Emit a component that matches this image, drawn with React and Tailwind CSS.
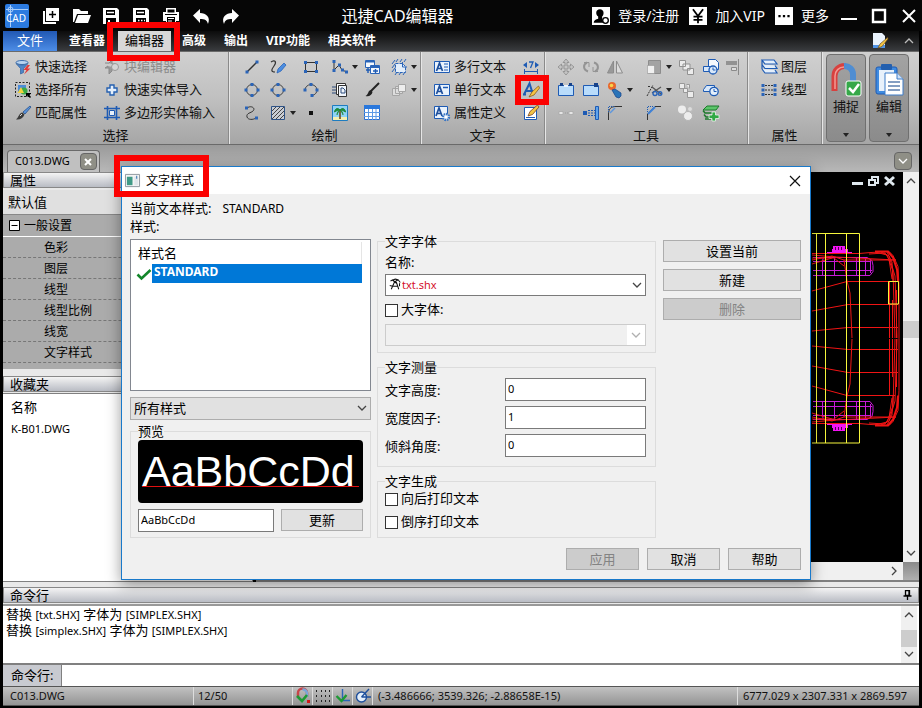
import { clsx } from 'clsx';

const icons = {
  funnel: (
    <>
      <ellipse cx="7" cy="3.5" rx="6" ry="2" fill="#b9d4f0" stroke="#3f6fae" />
      <path d="M1 4.500l4.500 5V15l3-1.500v-4l4.500-5c-3 2-9 2-12 0z" fill="#4f86c8" stroke="#33619c" strokeWidth=".7" />
      <path d="M12.500 6L8.500 11h3L9 15.500l6.500-6h-3L15 6z" fill="#e23a3a" />
    </>
  ),
  selectAll: (
    <>
      <path d="M.500.500h14v14H.500z" fill="none" stroke="#222" strokeDasharray="2 1.500" />
      <path d="M3 3h8v8H3z" fill="#4b8bd8" />
      <circle cx="9" cy="9" r="3.500" fill="#3ba946" />
      <path d="M2.500 11L6 5l3 6z" fill="#f2d23c" />
      <path d="M11 11h5v1l-2 .500L16 15l-1 1-2.500-2.500L11 15z" fill="#000" />
    </>
  ),
  brush: (
    <>
      <path d="M15 1L8 7l2 2 6-7z" fill="#5a94dc" stroke="#24508e" strokeWidth=".8" />
      <path d="M7.500 7.500C4 8 4 12 1 14.500c4 .500 7-1 8.500-5z" fill="#3b3b3b" />
      <path d="M5 11l2-2" stroke="#ddd" />
    </>
  ),
  blockEdit: (
    <>
      <path d="M1 4h4L8 1v4h3M4 7l-3 2h4v6l3-3V8" fill="#9a9a9a" stroke="#8a8a8a" />
      <circle cx="11" cy="8" r="3.500" fill="#d5d5d5" stroke="#999" />
    </>
  ),
  plus: <path d="M6 3h4v3h3v4h-3v3H6v-3H3V6h3z" fill="#e4effb" stroke="#2560b0" strokeWidth="1.400" />,
  polyInput: (
    <>
      <path d="M3.500 1v14M12.500 1v14M0 3.500h16M0 12.500h16" stroke="#1e5bb4" strokeWidth="1.600" />
      <path d="M5.500 5.500h5v5h-5z" fill="#e8f1fb" stroke="#1e5bb4" />
    </>
  ),
  line: (
    <>
      <path d="M3 13L13 3" stroke="#333" strokeWidth="1.300" />
      <path d="M1.500 11.500h3v3h-3zM11.500 1.500h3v3h-3z" fill="#2a64b8" />
    </>
  ),
  sketch: (
    <>
      <path d="M1 3c4-3 6 0 3 4s-3 6 1 6" fill="none" stroke="#333" strokeWidth="1.200" />
      <path d="M14 4l-6 6-1 4 4-2 5-6z" fill="#4d8ee0" stroke="#1e5bb4" strokeWidth=".7" />
    </>
  ),
  rect: (
    <>
      <path d="M2.500 3.500h11v9h-11z" fill="none" stroke="#333" />
      <path d="M1 2h3v3H1zM12 2h3v3h-3zM1 11h3v3H1zM12 11h3v3h-3z" fill="#2a64b8" />
    </>
  ),
  polyline: (
    <>
      <path d="M2 2v9l5-5 3 5 5 2" fill="none" stroke="#333" />
      <path d="M.500 1h3v3h-3zM.500 10h3v3h-3zM6 4.500h3v3H6zM9 9.500h3v3H9zM13 11.500h3v3h-3z" fill="#2a64b8" />
    </>
  ),
  insertBlock: (
    <>
      <path d="M1.500 1.500h9v7h-9zM6.500 6.500h9v8h-9z" fill="#f4f8fd" stroke="#2a64b8" />
      <path d="M2 2.500h8M7 8h8" stroke="#2a64b8" strokeWidth="2" />
      <path d="M9 12h5M11.500 10v4M2 11h4M4 9v5" stroke="#1e5bb4" strokeWidth="1.400" />
    </>
  ),
  region: (
    <>
      <path d="M4.500 4.500h7l3 3v6h-10z" fill="#e3eefa" stroke="#2a64b8" strokeDasharray="3 1" />
      <path d="M1 5l3-4M1 9l3-4M1 13l3-4M5 3l2-3M9 3l2-3M13 3l2-3M4 16l2-3M8 16l2-3M12 16l2-3" stroke="#2a64b8" />
      <path d="M11.500 3v5H16" fill="none" stroke="#2a64b8" />
    </>
  ),
  circle: (
    <>
      <circle cx="8" cy="8" r="5.500" fill="none" stroke="#444" />
      <path d="M6.500 1h3v3h-3zM6.500 12h3v3h-3zM.500 6.500h3v3h-3zM12.500 6.500h3v3h-3z" fill="#2a64b8" />
    </>
  ),
  arc: (
    <>
      <path d="M2 8a6 5.500 0 1 1 7 5.500" fill="none" stroke="#444" />
      <path d="M.500 6.500h3v3h-3zM6.500 1h3v3h-3zM12.500 6.500h3v3h-3zM7.500 12h3v3h-3z" fill="#2a64b8" />
    </>
  ),
  pages: (
    <>
      <path d="M4.500 1.500h9v11h-9z" fill="#fff" stroke="#333" />
      <path d="M6.500 3.500h8v11h-8z" fill="#f1f6fc" stroke="#333" />
      <path d="M0 5h4M0 8h4M0 11h4M9 6v5h4V8l-2-2z" fill="none" stroke="#2a4a7a" />
    </>
  ),
  paint: (
    <>
      <path d="M15 1L7 9" stroke="#222" strokeWidth="2" />
      <path d="M7 8c-3 0-2 4-5.500 6C5 15 8 13 8.500 10z" fill="#222" />
    </>
  ),
  cubes: (
    <>
      <path d="M1.500 6.500h7v7h-7zM4.500 4.500h7v7h-7z" fill="#ddd" stroke="#a5a5a5" />
      <path d="M7.500 2.500h7v7h-7z" fill="#ededed" stroke="#a5a5a5" />
    </>
  ),
  spline: (
    <>
      <path d="M3 3c4-3 9 0 6 3-2 2-7 2-6 6 1 3 6 3 9 1" fill="none" stroke="#333" />
      <path d="M1 1.500h3v3H1zM11 11.500h3v3h-3z" fill="#2a64b8" />
    </>
  ),
  hatch: (
    <>
      <path d="M1.500 1.500h13v13h-13z" fill="#c9cdd4" stroke="#2d5286" />
      <path d="M2 6l4-4M2 10l8-8M2 14L14 2M6 14l8-8M10 14l4-4" stroke="#444" />
    </>
  ),
  point: <path d="M6 6h4v4H6z" fill="#111" />,
  image: (
    <>
      <path d="M.500.500h15v15H.500z" fill="#8fd3f5" stroke="#1e7cc0" />
      <path d="M1 12h14v3H1z" fill="#f3efb0" />
      <path d="M8 5v9" stroke="#6b4a1e" strokeWidth="1.600" />
      <path d="M8 5C5 2 3 4 2.500 7 5 5 6 6 8 5c2 1 3 0 5.500 2C13 4 11 2 8 5zM8 5C6 6 5 8 5 10M8 5c2 1 3 3 3 5" fill="#1f8a3a" stroke="#1f8a3a" />
    </>
  ),
  table: (
    <>
      <path d="M.500.500h15v14H.500z" fill="#fff" stroke="#2a6fd0" />
      <path d="M0 0h16v4H0z" fill="#2a78dc" />
      <path d="M4.500 4v11M8.500 4v11M12 4v11M0 7.500h16M0 11.500h16" stroke="#5c9ae6" />
    </>
  ),
  mtext: (
    <>
      <path d="M.500 2.500h15v11H.500z" fill="#eaf3fd" stroke="#1e5bb4" />
      <path d="M2.500 12L5.500 4l3 8M3.500 9.500h4" fill="none" stroke="#1e4f9c" strokeWidth="1.700" />
      <path d="M10 5h4M10 8h4M10 11h4" stroke="#1e5bb4" />
    </>
  ),
  stext: (
    <>
      <path d="M.500 2.500h15v11H.500z" fill="#eaf3fd" stroke="#1e5bb4" />
      <path d="M2.500 12L5.500 4l3 8M3.500 9.500h4" fill="none" stroke="#1e4f9c" strokeWidth="1.700" />
      <path d="M9 5.500h5" stroke="#1e5bb4" strokeWidth="1.500" />
    </>
  ),
  attr: (
    <>
      <path d="M.500 1.500h13v12H.500z" fill="#eaf3fd" stroke="#1e5bb4" />
      <path d="M2 11L5 3l3 8M3 8.500h4" fill="none" stroke="#1e4f9c" strokeWidth="1.700" />
      <circle cx="12" cy="12" r="3" fill="#fff" stroke="#3a76c4" strokeWidth="2.400" strokeDasharray="1.600 .7" />
    </>
  ),
  dimText: (
    <>
      <path d="M1 12.500h14M1.500 10v5M14.500 10v5" stroke="#1e5bb4" />
      <path d="M0 6l4-3v6zM16 6l-4-3v6z" fill="#1e5bb4" />
      <path d="M6 3h4L7.500 9" fill="none" stroke="#1e5bb4" strokeWidth="1.300" />
    </>
  ),
  textStyle: (
    <>
      <path d="M1 12.500L6.500 1.500 10 12.500M3 9h7M0 12.500h3" fill="none" stroke="#1e5bb4" strokeWidth="2" />
      <path d="M15.500 4l-6.500 6-3 5 5-2 5.500-7z" fill="#f3c544" stroke="#8a5a1e" strokeWidth=".8" />
    </>
  ),
  textEdit: (
    <>
      <path d="M1.500 2.500h12v12h-12z" fill="#fff" stroke="#1e5bb4" />
      <path d="M3 12.500h9" stroke="#1e5bb4" />
      <path d="M14.500 0L7 6.500 5 11l4.500-1.500L16 2z" fill="#f3c544" stroke="#7a3f1e" strokeWidth=".8" />
    </>
  ),
  move: <path d="M8 0l3 3.500H9V7h3.500V5L16 8l-3.500 3V9H9v3.500h2L8 16l-3-3.500h2V9H3.500v2L0 8l3.500-3v2H7V3.500H5z" fill="#c4c4c4" stroke="#8c8c8c" strokeWidth=".8" />,
  rotate: (
    <>
      <path d="M4 3.500a6 5 0 0 0 1 9M12 12.500a6 5 0 0 0-1-9" fill="none" stroke="#949494" strokeWidth="2" />
      <path d="M1 3.500h5V8M15 12.500h-5V8" fill="none" stroke="#949494" />
    </>
  ),
  mirror: (
    <>
      <path d="M6.500 2v12H.500z" fill="#999" stroke="#8c8c8c" />
      <path d="M9.500 2v12h6z" fill="#dcdcdc" stroke="#8c8c8c" />
    </>
  ),
  scale: (
    <>
      <path d="M2.500 1.500h12v13h-12z" fill="#a3a3a3" stroke="#8c8c8c" />
      <path d="M1.500 6.500h7v8h-7z" fill="#f0f0f0" stroke="#8a8a8a" strokeDasharray="1 1" />
    </>
  ),
  copyGrey: <path d="M1.500 1.500h6v6h-6zM9.500 9.500h6v6h-6zM5 5h7v6H5z" fill="#ececec" stroke="#919191" />,
  copyBlue: (
    <>
      <path d="M5.500.500h7l3 3v7h-10z" fill="#f4f8fd" stroke="#1e5bb4" />
      <path d="M.500 7.500h8v5h-8z" fill="#d8e8fa" stroke="#1e5bb4" />
      <circle cx="10" cy="11" r="4" fill="#d8e8fa" stroke="#1e5bb4" strokeWidth="1.300" />
      <path d="M10 8.500V11h2.500" fill="none" stroke="#1e5bb4" />
    </>
  ),
  align: (
    <>
      <path d="M12.500 0v16" stroke="#8a8a8a" />
      <path d="M0 2h11v4H0z" fill="#929292" />
      <path d="M5.500 8.500h5v3h-5z" fill="#ddd" stroke="#8a8a8a" />
    </>
  ),
  joinGap: (
    <>
      <path d="M.500 3.500h15v10H.500z" fill="#b9dcfb" stroke="#1e5bb4" />
      <path d="M2 1h3v3H2zM11 1h3v3h-3z" fill="#17428a" />
      <path d="M6 3h4v2H6z" fill="#eaf3fd" />
    </>
  ),
  join: (
    <>
      <path d="M.500 3.500h15v10H.500z" fill="#b9dcfb" stroke="#1e5bb4" />
      <path d="M11 1h4v4h-4z" fill="#17428a" />
    </>
  ),
  explode: (
    <>
      <circle cx="5" cy="4" r="4" fill="#e8682c" />
      <circle cx="4.500" cy="3.500" r="1.800" fill="#f8d24a" />
      <path d="M5 8l3-1 6 4v3l-2 2-3-1z" fill="#2a74b8" stroke="#17428a" strokeWidth=".7" />
    </>
  ),
  trim: (
    <>
      <path d="M1 14L7 3M2 4.500h3" stroke="#333" strokeDasharray="2 1" />
      <path d="M6 11l9-6M6 5l9 7" stroke="#555" strokeWidth="1.300" />
      <circle cx="9" cy="11.500" r="2" fill="none" stroke="#2a64b8" strokeWidth="1.400" />
      <circle cx="14" cy="11.500" r="1.800" fill="none" stroke="#2a64b8" strokeWidth="1.400" />
    </>
  ),
  arrayGrey: <path d="M1.500 1.500h5v5h-5zM5.500 6.500h4v4h-4zM9.500 9.500h6v6h-6zM8.500 2.500h3v4" fill="#ececec" stroke="#999" />,
  offset: (
    <>
      <path d="M.500 7.500l3-4h8v6h-11z" fill="#d8e8fa" stroke="#1e5bb4" />
      <circle cx="11" cy="9.500" r="4.200" fill="#e4effb" stroke="#1e5bb4" strokeWidth="1.300" />
      <path d="M11 7v2.500h2.500" fill="none" stroke="#1e5bb4" />
    </>
  ),
  breakAt: (
    <>
      <path d="M1 6.500h4v3H1zM11 6.500h4v3h-4z" fill="#e6e6e6" stroke="#aaa" strokeWidth=".8" />
      <path d="M7 7.500h1v1H7zM9 7.500h1v1H9z" fill="#999" />
    </>
  ),
  extend: (
    <>
      <path d="M12.500 1.500h3v13h-3z" fill="#5fa4ec" stroke="#1e5bb4" />
      <path d="M0 6h4v4H0z" fill="#1e5bb4" />
      <path d="M5 5.500h7M5 10.500h7M5 8h7" stroke="#1e5bb4" strokeDasharray="2 1" />
    </>
  ),
  fillet: (
    <>
      <path d="M1.500 15V9C1.500 4 4 1.500 9 1.500h6" fill="none" stroke="#333" />
      <path d="M1.500 7V1.500H7" fill="none" stroke="#1e5bb4" strokeDasharray="1 1" />
      <path d="M3 8l5-5" stroke="#5c96de" strokeWidth="1.400" />
    </>
  ),
  chamfer: (
    <>
      <path d="M1.500 15V9L9 1.500h6" fill="none" stroke="#333" />
      <path d="M1.500 7V1.500H7" fill="none" stroke="#1e5bb4" strokeDasharray="1 1" />
      <path d="M2 9l7-7" stroke="#3f82d8" strokeWidth="2" />
    </>
  ),
  circlesGrey: (
    <>
      <circle cx="4" cy="4.500" r="4" fill="#ededed" />
      <circle cx="12" cy="4" r="2.500" fill="#dcdcdc" stroke="#bbb" />
      <circle cx="10" cy="11" r="4.500" fill="#ededed" stroke="#b5b5b5" />
    </>
  ),
  layerAdd: (
    <>
      <path d="M0 5l4-4h12l-3 4z" fill="#5cc46a" stroke="#1d7a2c" />
      <path d="M0 5.500l2 2.500h7M1 9.500L3 12h5M2 14h6" fill="none" stroke="#1d7a2c" strokeWidth="1.500" />
      <path d="M9 7h3.500v3H16v3.500h-3.500V16H9v-2.500H6V10h3z" fill="#2fa844" stroke="#e8f5ea" strokeWidth=".8" />
    </>
  ),
  layers: (
    <path d="M1 1h12l3 4H4zM1 5.500l3 4h12l-2-3M1 10l3 4h12l-2-3M1 1v9" fill="#e4effb" stroke="#1e5bb4" strokeWidth="1.200" />
  ),
  linetype: (
    <>
      <path d="M4 3.500h8M4 8h8M4 12.500h8" stroke="#333" strokeDasharray="2 1" />
      <path d="M.500 2h3v3h-3zM12.500 2h3v3h-3zM.500 6.500h3v3h-3zM12.500 6.500h3v3h-3zM.500 11h3v3h-3zM12.500 11h3v3h-3z" fill="#2a64b8" />
    </>
  ),
  penPage: (
    <>
      <path d="M1 0h9l3 3v12H1z" fill="#eaf3fd" />
      <path d="M1 12h12v3H1z" fill="#4f93e6" />
      <path d="M15.500 4.500L8 11l-2 4 4-1.500 6-7.500z" fill="#f3c544" stroke="#6a4a1e" strokeWidth=".7" />
    </>
  ),
  check: <path d="M1.500 8.500l4 4L14.500 4" fill="none" stroke="#13862a" strokeWidth="2.600" />,
  appWindow: (
    <>
      <path d="M.500 1.500h15v13H.500z" fill="#f4f4f4" stroke="#8c959d" />
      <path d="M2 4h6v9H2z" fill="#3f9a86" />
      <path d="M10 4h4v9h-4z" fill="#dfe6ea" />
      <path d="M12 3h1v3h-1z" fill="#2c6db0" />
    </>
  ),
  compass: (
    <path d="M3 15L7 6h3l3 9M5 11h7M6 4a2.500 2.500 0 1 1 5 0M2 4l4-2M12 2l3 4M7 6l5-4M10 7L5 3M1 10l4 1M14 7v4" fill="none" stroke="#111" strokeWidth="1.400" />
  ),
  newFile: (
    <>
      <path d="M0 3h2v11h11v2H0z" fill="#fff" />
      <path d="M3 0h13v13H3z" fill="#fff" />
      <path d="M9.500 3v7M6 6.500h7" stroke="#000" strokeWidth="1.500" />
    </>
  ),
  open: <path d="M0 1h6l2 2h7v3H4L1 14H0zM5 7h13l-3 8H2z" fill="#fff" />,
  save: (
    <>
      <path d="M0 0h14l2 2v14H0z" fill="#fff" />
      <path d="M3 2h9v5H3zM3 10h10v6H3z" fill="#000" />
      <path d="M4 4.500h7" stroke="#fff" strokeWidth="1.500" />
      <path d="M5 12h2v4H5z" fill="#fff" />
    </>
  ),
  saveAs: (
    <>
      <path d="M0 0h14l2 2v14H0z" fill="#fff" />
      <path d="M3 2h9v5H3zM3 10h10v6H3z" fill="#000" />
      <path d="M4 4.500h7M5 12.500h1.500M8 12.500h1.500M11 12.500h1" stroke="#fff" strokeWidth="1.500" />
    </>
  ),
  print: (
    <>
      <path d="M3 0h10v4h3v9h-3v3H3v-3H0V4h3z" fill="#fff" />
      <path d="M4.500 1.500h7v3h-7zM4 9h8v5.500H4zM2 6h12v1H2z" fill="#000" />
      <path d="M5 10.500h6M5 13h4" stroke="#fff" />
    </>
  ),
  undo: <path d="M7 1v4c6 0 11 4 8 11-1-4-3-5-8-5v4L0 7.500z" fill="#fff" />,
  redo: <path d="M9 1v4C3 5-2 9 1 16c1-4 3-5 8-5v4l7-7.500z" fill="#fff" />,
  user: (
    <>
      <path d="M0 0h16v16H0z" fill="#fff" />
      <path d="M7 2c4 0 4 5 2 6.500V10l1.500 4H1.500c0-2 2-3 4-3.500V8.500C3 7 3 2 7 2z" fill="#000" />
      <circle cx="12" cy="12" r="2.500" fill="#fff" stroke="#000" strokeWidth="1.200" />
    </>
  ),
  yen: (
    <>
      <path d="M0 0h16v16H0z" fill="#fff" />
      <path d="M3.500 2L8 8l4.500-6M8 8v6.500M4 8.500h8M4 11.500h8" fill="none" stroke="#000" strokeWidth="1.600" />
    </>
  ),
  dots: (
    <>
      <path d="M0 0h16v16H0z" fill="#fff" />
      <path d="M3 7h2v2H3zM7 7h2v2H7zM11 7h2v2h-2z" fill="#000" />
    </>
  ),
  minimize: <path d="M0 11h16" stroke="#fff" strokeWidth="2" />,
  maximize: <path d="M2 2h12v12H2z" fill="none" stroke="#fff" strokeWidth="2.400" />,
  close: <path d="M2 2l12 12M14 2L2 14" stroke="#fff" strokeWidth="2" />,
  osnap: (
    <>
      <path d="M3 9V5a4 4 0 0 1 9 0v4" fill="none" stroke="#c8464a" strokeWidth="2.500" />
      <path d="M7.500 1.500A4 4 0 0 1 12 5.500V9" fill="none" stroke="#7aa6d8" strokeWidth="2.500" />
      <path d="M2 8l5 5 5-6" fill="none" stroke="#1d9a34" strokeWidth="2.600" />
      <path d="M12 12h3v3h-3z" fill="#d01818" />
    </>
  ),
  grid: <path d="M1 2h1v2H1zM6 2h1v2H6zM10 2h1v2h-1zM14 2h1v2h-1zM1 7h1v2H1zM6 7h1v2H6zM10 7h1v2h-1zM14 7h1v2h-1zM1 12h1v2H1zM6 12h1v2H6zM10 12h1v2h-1zM14 12h1v2h-1z" fill="#222" />,
  ortho: (
    <>
      <path d="M7.500 1v12M7 12.500h8" stroke="#2a64b8" strokeWidth="1.400" />
      <path d="M1.500 8l5 5 5-6" fill="none" stroke="#1d9a34" strokeWidth="2.400" />
    </>
  ),
  polar: (
    <>
      <circle cx="6.500" cy="9" r="5" fill="#e4effb" stroke="#1e4f9c" strokeWidth="1.400" />
      <path d="M6.500 9H16M6.500 9L14 1" stroke="#1e4f9c" strokeWidth="1.400" />
    </>
  ),
};

const Icon = ({ name, className = 'size-4' }) => (
  <svg viewBox="0 0 16 16" className={clsx('shrink-0 overflow-visible', className)} aria-hidden="true">
    {icons[name]}
  </svg>
);

const Caret = () => <span className="block size-0 border-x-3 border-t-4 border-x-transparent border-t-[#222]" />;

const Chevron = ({ className, dir = 'down' }) => {
  const points = { down: 'M1 3l4 4 4-4', up: 'M1 7l4-4 4 4', right: 'M3 1l4 4-4 4' };
  return (
    <svg viewBox="0 0 10 10" className={clsx('size-2.5 shrink-0', className)} aria-hidden="true">
      <path d={points[dir]} fill="none" stroke="currentColor" strokeWidth="1.300" />
    </svg>
  );
};

const Highlight = ({ className }) => (
  <span className={clsx('pointer-events-none absolute z-30 border-6 border-[#fb0000]', className)} />
);

const quickActions = [
  ['newFile', '新建'],
  ['open', '打开'],
  ['save', '保存'],
  ['saveAs', '另存为'],
  ['print', '打印'],
  ['undo', '撤销'],
  ['redo', '重做'],
];

const TitleBar = () => (
  <header className="flex h-[31px] items-center bg-[#060606] px-[3px] text-white">
    <svg viewBox="0 0 24 24" className="ml-0.5 size-6" aria-hidden="true">
      <rect width="24" height="24" rx="2" fill="#2c7be0" />
      <path d="M5.500 1v22M1 5.500h22" stroke="#a9cdf8" />
      <circle cx="5.500" cy="5.500" r="2.500" fill="none" stroke="#a9cdf8" />
      <text x="1" y="18" fontSize="10" fontFamily="Noto Sans" fill="#fff">CAD</text>
    </svg>
    <div className="ml-3.5 flex items-center gap-3.5">
      {quickActions.map(([icon, label]) => (
        <button key={icon} aria-label={label}>
          <Icon name={icon} />
        </button>
      ))}
    </div>
    <h1 className="flex-1 pr-9 text-center text-base">迅捷CAD编辑器</h1>
    <div className="flex items-center text-sm">
      <button className="flex items-center gap-2">
        <Icon name="user" className="size-[18px]" />
        登录/注册
      </button>
      <button className="ml-2.5 flex items-center gap-2">
        <Icon name="yen" className="size-[18px]" />
        加入VIP
      </button>
      <button className="ml-2.5 flex items-center gap-2">
        <Icon name="dots" className="size-[18px]" />
        更多
      </button>
      <div className="ml-3 flex items-center gap-3.5 pr-0.5">
        <button aria-label="最小化"><Icon name="minimize" /></button>
        <button aria-label="最大化"><Icon name="maximize" /></button>
        <button aria-label="关闭"><Icon name="close" /></button>
      </div>
    </div>
  </header>
);

const menuTabs = ['查看器', '编辑器', '高级', '输出', 'VIP功能', '相关软件'];

const MenuBar = () => (
  <nav className="flex h-5 items-stretch bg-gradient-to-b from-[#0c0c0c] to-[#3a3c3f] text-xs font-bold text-white">
    <button className="mr-[3px] w-[54px] bg-gradient-to-b from-[#2158b4] to-[#4d8de6] text-[13px] font-normal">文件</button>
    {menuTabs.map((tab) =>
      tab === '编辑器' ? (
        <button key={tab} className="relative mx-1 mr-0.5 bg-[#d8d8d8] px-[7px] text-[13px] font-normal text-black">
          {tab}
          <Highlight className="-top-[9px] -right-[9px] -bottom-[10px] -left-[11px]" />
        </button>
      ) : (
        <button key={tab} className="px-[9px]">{tab}</button>
      ),
    )}
    <div className="ml-auto flex items-center gap-4 pr-[5px]">
      <button aria-label="自定义"><Icon name="penPage" /></button>
      <button aria-label="收起功能区"><Chevron dir="up" className="text-[#bbb]" /></button>
    </div>
  </nav>
);

const RibbonGroup = ({ title, className, children }) => (
  <section className={clsx('flex flex-col border-r border-[#8a8a8a] shadow-[1px_0_0_#e6e6e6]', className)}>
    <div className="h-[70px] pt-[3px]">{children}</div>
    <h2 className="pt-1 text-center text-[13px] leading-[18px]">{title}</h2>
  </section>
);

const ToolButton = ({ icon, label, muted, caret }) => (
  <button
    aria-label={label ?? icon}
    className={clsx('flex h-[23px] items-center gap-1 text-[13px] whitespace-nowrap', muted && 'text-[#8b8b8b]')}
  >
    {icon && <Icon name={icon} />}
    {label}
    {caret && <Caret />}
  </button>
);

const drawTools = [
  ['line'], ['sketch'], ['rect'], ['polyline', true], ['insertBlock'], ['region', true],
  ['circle'], ['circle'], ['arc'], ['pages'], ['paint'], ['cubes', true],
  ['spline'], ['hatch', true], ['point'], ['image'], ['table'],
];

const editTools = [
  ['move'], ['rotate'], ['mirror'], ['scale', true], ['copyGrey'], ['copyBlue'], ['align'],
  ['joinGap'], ['join'], ['explode', true], ['trim', true], ['arrayGrey'], ['offset'], null,
  ['breakAt'], ['extend'], ['fillet'], ['chamfer'], ['circlesGrey'], ['layerAdd'],
];

const LargeButton = ({ label, children }) => (
  <button className="my-0.5 flex w-10 flex-col items-center justify-between rounded border border-[#6f6f6f] bg-gradient-to-b from-[#a3a3a3] to-[#8b8b8b] pt-2 pb-1 text-[13px] leading-[18px]">
    <span className="flex flex-col items-center">
      {children}
      {label}
    </span>
    <Caret />
  </button>
);

const Ribbon = () => (
  <div className="flex h-[94px] border-y border-[#6a6a6a] bg-gradient-to-b from-[#d0d0d0] via-[#c0c0c0] to-[#a6a6a6] text-[#111]">
    <RibbonGroup title="选择" className="w-[226px]">
      <div className="grid grid-cols-[89px_1fr] pl-3">
        <ToolButton icon="funnel" label="快速选择" />
        <ToolButton icon="blockEdit" label="块编辑器" muted />
        <ToolButton icon="selectAll" label="选择所有" />
        <ToolButton icon="plus" label="快速实体导入" />
        <ToolButton icon="brush" label="匹配属性" />
        <ToolButton icon="polyInput" label="多边形实体输入" />
      </div>
    </RibbonGroup>
    <RibbonGroup title="绘制" className="w-[192px]">
      <div className="grid grid-cols-[26px_33px_29px_32px_27px_26px] pl-[15px]">
        {drawTools.map(([icon, caret], i) => (
          <ToolButton key={i} icon={icon} caret={caret} />
        ))}
      </div>
    </RibbonGroup>
    <RibbonGroup title="文字" className="w-[124px]">
      <div className="grid grid-cols-[89px_1fr] pl-[13px]">
        <ToolButton icon="mtext" label="多行文本" />
        <ToolButton icon="dimText" />
        <ToolButton icon="stext" label="单行文本" />
        <div className="relative">
          <ToolButton icon="textStyle" />
          <Highlight className="-top-[3px] -left-2 h-[30px] w-[34px]" />
        </div>
        <ToolButton icon="attr" label="属性定义" />
        <ToolButton icon="textEdit" />
      </div>
    </RibbonGroup>
    <RibbonGroup title="工具" className="w-[203px]">
      <div className="grid grid-cols-[25px_24px_39px_32px_25px_23px_20px] pl-[13px]">
        {editTools.map((tool, i) =>
          tool ? <ToolButton key={i} icon={tool[0]} caret={tool[1]} /> : <span key={i} />,
        )}
      </div>
    </RibbonGroup>
    <RibbonGroup title="属性" className="w-[74px]">
      <div className="pl-[13px]">
        <ToolButton icon="layers" label="图层" />
        <ToolButton icon="linetype" label="线型" />
      </div>
    </RibbonGroup>
    <div className="ml-1 flex gap-[3px]">
      <LargeButton label="捕捉">
        <svg viewBox="0 0 32 34" className="h-[34px] w-8" aria-hidden="true">
          <path d="M4.500 28V13a10 10 0 0 1 10-10" fill="none" stroke="#d8413f" strokeWidth="6" />
          <path d="M14 3a8.500 8.500 0 0 1 9 9v6" fill="none" stroke="#4f8dd2" strokeWidth="6" />
          <path d="M5 26V13a9 9 0 0 1 9-9" fill="none" stroke="#f19a94" strokeWidth="1.500" />
          <rect x="16" y="18" width="15" height="15" rx="2" fill="#35a849" stroke="#fff" />
          <path d="M19 25l4 4 6-8" fill="none" stroke="#fff" strokeWidth="2.500" />
        </svg>
      </LargeButton>
      <LargeButton label="编辑">
        <svg viewBox="0 0 32 34" className="h-[34px] w-8" aria-hidden="true">
          <rect x="3" y="4" width="21" height="27" rx="2" fill="#3f8be0" stroke="#1e5bb4" />
          <rect x="6" y="7" width="15" height="21" fill="#e8f1fb" />
          <rect x="8" y="1" width="11" height="6" rx="1" fill="#235fae" />
          <path d="M12 10h12l6 6v16H12z" fill="#fff" stroke="#3f7cc8" />
          <path d="M24 10v6h6" fill="#cfe1f7" stroke="#3f7cc8" />
          <path d="M15 19h12M15 23h12M15 27h12" stroke="#5c7fae" strokeWidth="1.500" />
        </svg>
      </LargeButton>
    </div>
  </div>
);

const DocumentTabs = () => (
  <div className="flex h-[27px] items-end justify-between bg-gradient-to-b from-[#9a9a9a] to-[#b8b8b8] pr-[7px]">
    <div className="ml-1 flex h-[22px] items-center gap-2.5 rounded-t-sm border border-b-0 border-[#6a6a6a] bg-[#c0c0c0] pl-[7px] text-[11px]">
      C013.DWG
      <button aria-label="关闭标签" className="mr-0.5 flex size-[17px] items-center justify-center rounded-sm border border-[#666] bg-[#8f8f86]">
        <svg viewBox="0 0 8 8" className="size-2"><path d="M1 1l6 6M7 1L1 7" stroke="#fff" strokeWidth="2" /></svg>
      </button>
    </div>
    <button aria-label="文档列表" className="mb-0.5 flex size-[18px] items-center justify-center rounded-sm border border-[#666] bg-[#8f8f86] text-white">
      <Chevron />
    </button>
  </div>
);

const PanelHeader = ({ title, children }) => (
  <div className="flex h-4 items-center justify-between border border-[#888] bg-gradient-to-b from-[#f4f4f4] to-[#b9bcc4] px-1.5 text-[13px] leading-[14px]">
    <h2>{title}</h2>
    {children}
  </div>
);

const properties = ['色彩', '图层', '线型', '线型比例', '线宽', '文字样式'];

const SidePanel = () => (
  <aside className="flex w-[250px] flex-col border-r border-[#808080] bg-[#e9e9e9]">
    <PanelHeader title="属性" />
    <div className="mt-0.5 h-6 bg-[#e0e0e0] pl-[5px] text-[13px] leading-6">默认值</div>
    <div className="bg-[#ababab] pb-1.5">
      <h3 className="flex h-[23px] items-center gap-1 border-t border-b border-t-[#888] border-b-white pl-1.5 text-xs">
        <svg viewBox="0 0 11 11" className="size-[11px]" aria-hidden="true">
          <path d="M.500.500h10v10H.500z" fill="#fff" stroke="#000" />
          <path d="M2.500 5.500h6" stroke="#000" />
        </svg>
        一般设置
      </h3>
      <ul className="text-xs">
        {properties.map((name) => (
          <li key={name} className="h-[21px] border-b border-dashed border-[#777] pl-[41px] leading-[21px]">{name}</li>
        ))}
      </ul>
    </div>
    <div className="mt-[7px]">
      <PanelHeader title="收藏夹" />
    </div>
    <div className="mt-px flex-1 border-y border-[#808080] bg-white px-2 pt-0.5 text-[13px]">
      <div className="leading-[22px]">名称</div>
      <div className="text-[11px] leading-[22px]">K-B01.DWG</div>
    </div>
  </aside>
);

const CarHalf = () => (
  <>
    <g stroke="#c81ad8" fill="none">
      <path d="M812 257.500h54l5 3 1 5v6l-3 4h-57M812 270.500h59M815.500 257v18M822.500 257l-1 4v14M833.500 257v18M845.500 257v18M855.500 257v18M864.500 258v17M869.500 259v14M812 261.500h58" />
    </g>
    <path d="M826 252h5v-3h1v-3h12v3h3v3h4v2h-25z" fill="#f414f4" />
    <path d="M834.500 247v3M837.500 247v3M840.500 247v3" stroke="#500050" />
    <g stroke="#f01414" fill="none">
      <path d="M811 253.500h47l12-1 18-1 4 4 5 11 1 20v52M868 254l16-1 4 6 3 20M874 252l12 3 6 16 2 67M880 252l8 4 6 20 2 62M886 252l5 10 1 20M811 260l20-4 12 4 3 21M811 258h22l10 8M811 255l24 2 60 3M843 260h52M811 264l20-6" />
      <path d="M874 251.500h13l5 6 4 12 1 12" strokeWidth="2" />
      <path d="M811 291l35-9.500h48M811 311l36-6.500h50M811 331l36-3.500h50M846 281l3 12 1 22 1 23M888.500 281v57M891.500 300v38M895.500 290v48" />
    </g>
  </>
);

const Drawing = () => (
  <svg viewBox="782 172 120 390" className="h-[390px] w-[120px]" aria-hidden="true">
    <CarHalf />
    <g transform="translate(0 677) scale(1 -1)">
      <CarHalf />
    </g>
    <path d="M811 233.500h47.500v209.500H811M815.500 233v210M824.500 233v210M845.500 233v210M887.500 281.500h10v22.500h-10z" fill="none" stroke="#f6f63c" />
  </svg>
);

const Canvas = () => (
  <main className="ml-[3px] grid flex-1 grid-cols-[1fr_16px] grid-rows-[1fr_18px] border-b-2 border-[#808080]">
    <div className="relative flex justify-end bg-black">
      <Drawing />
      <svg viewBox="0 0 44 12" className="absolute top-[3px] right-[7px] h-3 w-11" aria-hidden="true">
        <path d="M0 8.500h11" stroke="#dfe8ee" strokeWidth="3" />
        <path d="M17 5h6v5h-6zM20 4.500V2h6v6h-2.500" fill="none" stroke="#dfe8ee" strokeWidth="2" />
        <path d="M33 2l9 8M42 2l-9 8" stroke="#dfe8ee" strokeWidth="3" />
      </svg>
    </div>
    <div className="flex flex-col items-center justify-between bg-[#f0f0f0] py-1 text-[#444]">
      <Chevron dir="up" />
      <span className="mb-[76px] h-[17px] w-full bg-[#cdcdcd]" />
      <Chevron />
    </div>
    <div className="flex items-center justify-end bg-[#f0f0f0] pr-1 text-[#444]">
      <Chevron dir="right" />
    </div>
    <div className="bg-gradient-to-b from-[#8a8a8a] to-[#b0b0b0]" />
  </main>
);

const CommandPanel = () => (
  <section className="bg-[#e9e9e9] pt-[5px]">
    <PanelHeader title="命令行">
      <svg viewBox="0 0 9 10" className="h-2.5 w-[9px]" aria-hidden="true">
        <path d="M2.500.500h4v5h-4zM.500 6h8M4.500 6v4M6 1v5" fill="none" stroke="#000" strokeWidth="1.300" />
      </svg>
    </PanelHeader>
    <div className="mt-px flex h-[61px] justify-between border-y-2 border-[#808080] border-t-[#999] bg-white pr-0.5">
      <div className="pl-[3px] text-[13px] leading-4">
        <p className="h-4">替换 <span className="text-[11px]">[txt.SHX]</span> 字体为 <span className="text-[11px]">[SIMPLEX.SHX]</span></p>
        <p className="h-4">替换 <span className="text-[11px]">[simplex.SHX]</span> 字体为 <span className="text-[11px]">[SIMPLEX.SHX]</span></p>
      </div>
      <div className="flex w-4 flex-col items-center justify-between bg-[#f0f0f0] py-1 text-[#444]">
        <Chevron dir="up" />
        <span className="mt-2 h-[17px] w-full bg-[#cdcdcd]" />
        <Chevron />
      </div>
    </div>
    <div className="flex h-[21px]">
      <label htmlFor="command" className="w-[59px] border-r border-[#808080] bg-[#c8cad0] pl-2 text-[13px] leading-5">命令行:</label>
      <input id="command" className="flex-1 bg-white px-1 text-[13px] outline-none" />
    </div>
  </section>
);

const StatusBar = () => (
  <footer className="flex h-5 items-center border-y border-[#555] bg-gradient-to-b from-[#c2c2c2] to-[#949494] text-[11px] leading-[18px] text-[#111]">
    <span className="w-[190px] pl-[7px]">C013.DWG</span>
    <span className="w-[99px] border-l border-[#ddd] pl-1">12/50</span>
    {['osnap', 'grid', 'ortho', 'polar'].map((name) => (
      <button key={name} aria-label={name} className="flex h-full w-5 items-center justify-center border-l border-[#ddd]">
        <Icon name={name} />
      </button>
    ))}
    <span className="w-[251px] border-l border-[#ddd] pl-[5px]">(-3.486666; 3539.326; -2.88658E-15)</span>
    <span className="ml-auto border-l border-[#ddd] pr-3 pl-[5px]">6777.029 x 2307.331 x 2869.597</span>
  </footer>
);

const DialogButton = ({ disabled, className, children }) => (
  <button
    disabled={disabled}
    className={clsx(
      'h-[22px] border border-[#adadad] text-[13px] leading-[18px]',
      disabled ? 'bg-[#cccccc] text-[#838383]' : 'bg-[#e1e1e1] text-black',
      className,
    )}
  >
    {children}
  </button>
);

const Group = ({ title, className, children }) => (
  <fieldset className={clsx('border border-[#dcdcdc] px-[7px]', className)}>
    <legend className="text-[13px] leading-[18px]">{title}</legend>
    {children}
  </fieldset>
);

const CheckRow = ({ children }) => (
  <label className="flex h-[18px] items-center gap-[3px] text-[13px]">
    <input type="checkbox" className="size-[13px] appearance-none border border-[#333] bg-white" />
    {children}
  </label>
);

const measures = [
  { id: 'height', label: '文字高度:', value: '0' },
  { id: 'width', label: '宽度因子:', value: '1' },
  { id: 'angle', label: '倾斜角度:', value: '0' },
];

const inputStyle = 'border border-[#7a7a7a] bg-white px-0.5 pb-0.5 text-[11px] outline-none';

const TextStyleDialog = () => (
  <div
    role="dialog"
    aria-labelledby="dialog-title"
    className="absolute top-[166px] left-[121px] z-20 w-[690px] border border-[#1979ca] bg-[#f0f0f0] shadow-[0_4px_14px_rgba(0,0,0,0.4)]"
  >
    <div className="flex h-[27px] items-center justify-between bg-white pr-[9px] pl-[3px]">
      <div className="relative flex items-center gap-1.5">
        <Icon name="appWindow" className="size-[15px]" />
        <h2 id="dialog-title" className="text-xs leading-4">文字样式</h2>
        <Highlight className="-top-[18px] -right-[15px] -bottom-2 -left-[11px]" />
      </div>
      <button aria-label="关闭">
        <svg viewBox="0 0 12 12" className="size-3"><path d="M1 1l10 10M11 1L1 11" stroke="#111" strokeWidth="1.200" /></svg>
      </button>
    </div>

    <div className="pt-1.5 pr-[9px] pb-[9px] pl-2">
      <p className="flex h-[18px] items-center gap-[11px] text-[13px]">
        当前文本样式: <span className="text-xs">STANDARD</span>
      </p>
      <div className="flex">
        {/* Style list and preview */}
        <div className="w-[241px]">
          <h3 className="text-[13px] leading-4">样式:</h3>
          <div className="mt-[5px] h-[152px] border border-[#828790] bg-white pt-0.5 pr-2 pl-[5px] text-[13px]">
            <div className="border-r border-[#e5e5e5] pl-0.5 leading-[22px]">样式名</div>
            <div className="flex h-[19px] items-center">
              <Icon name="check" />
              <span className="h-full flex-1 bg-[#0078d7] pl-0.5 text-xs leading-4 font-bold text-white">STANDARD</span>
            </div>
          </div>
          <div className="relative mt-1.5">
            <select aria-label="样式过滤" className="block h-[23px] w-full appearance-none border border-[#adadad] bg-[#e1e1e1] pb-0.5 pl-[3px] text-[13px] leading-[18px]">
              <option>所有样式</option>
            </select>
            <Chevron className="absolute top-1.5 right-1 text-[#444]" />
          </div>
          <Group title="预览" className="mt-0.5 pb-[5px]">
            <div className="h-[63px] rounded bg-black px-1 font-['Liberation_Sans',sans-serif] text-[43px] leading-[63px] text-white">
              <div className="relative">
                AaBbCcDd
                <span className="absolute inset-x-0 top-[46px] h-px bg-[#e01010]" />
              </div>
            </div>
            <div className="mt-1.5 flex items-start gap-[7px]">
              <input aria-label="预览文本" defaultValue="AaBbCcDd" className={clsx(inputStyle, 'h-[23px] w-[136px]')} />
              <DialogButton className="flex-1">更新</DialogButton>
            </div>
          </Group>
        </div>

        {/* Font settings */}
        <div className="ml-1.5 flex w-[279px] flex-col gap-[5px] pt-3.5">
          <Group title="文字字体" className="pr-[9px] pb-1.5">
            <label htmlFor="font" className="mt-0.5 block text-[13px] leading-5">名称:</label>
            <div className="relative mt-0.5">
              <select id="font" className="block h-[22px] w-full appearance-none border border-[#7a7a7a] bg-white pl-4 text-[11px] text-[#d4102a]">
                <option>txt.shx</option>
              </select>
              <Icon name="compass" className="absolute top-1 left-1 size-3" />
              <Chevron className="absolute top-1.5 right-1 text-[#444]" />
            </div>
            <div className="my-[5px]">
              <CheckRow>大字体:</CheckRow>
            </div>
            <div className="relative">
              <select aria-label="大字体" disabled className="block h-[22px] w-full appearance-none border border-[#cccccc] bg-[#f0f0f0] opacity-100" />
              <Chevron className="absolute top-px right-px h-5 w-[18px] bg-white px-1 text-[#b0b0b0]" />
            </div>
          </Group>
          <Group title="文字测量" className="pr-[9px] pb-[9px]">
            <div className="flex flex-col gap-[5px] pt-0.5">
              {measures.map(({ id, label, value }) => (
                <div key={id} className="flex items-center justify-between">
                  <label htmlFor={id} className="text-[13px] leading-[18px]">{label}</label>
                  <input id={id} defaultValue={value} className={clsx(inputStyle, 'h-[23px] w-[141px]')} />
                </div>
              ))}
            </div>
          </Group>
          <Group title="文字生成" className="pb-1.5">
            <div className="flex flex-col gap-[5px]">
              <CheckRow>向后打印文本</CheckRow>
              <CheckRow>倒序打印文本</CheckRow>
            </div>
          </Group>
        </div>

        {/* Style actions */}
        <div className="ml-[7px] flex flex-1 flex-col gap-[7px] pt-[22px]">
          <DialogButton>设置当前</DialogButton>
          <DialogButton>新建</DialogButton>
          <DialogButton disabled>删除</DialogButton>
        </div>
      </div>

      <div className="mt-2.5 flex justify-end gap-2">
        <DialogButton disabled className="w-[73px]">应用</DialogButton>
        <DialogButton className="w-[73px]">取消</DialogButton>
        <DialogButton className="w-[73px]">帮助</DialogButton>
      </div>
    </div>
  </div>
);

export default function App() {
  return (
    <div className="relative flex min-h-screen flex-col bg-black font-['Noto_Sans','Noto_Sans_CJK_SC',sans-serif] text-black">
      <TitleBar />
      <div className="mr-[3px] ml-[3px] flex flex-1 flex-col pb-[3px]">
        <MenuBar />
        <Ribbon />
        <DocumentTabs />
        <div className="flex flex-1">
          <SidePanel />
          <Canvas />
        </div>
        <CommandPanel />
        <StatusBar />
      </div>
      <TextStyleDialog />
    </div>
  );
}
